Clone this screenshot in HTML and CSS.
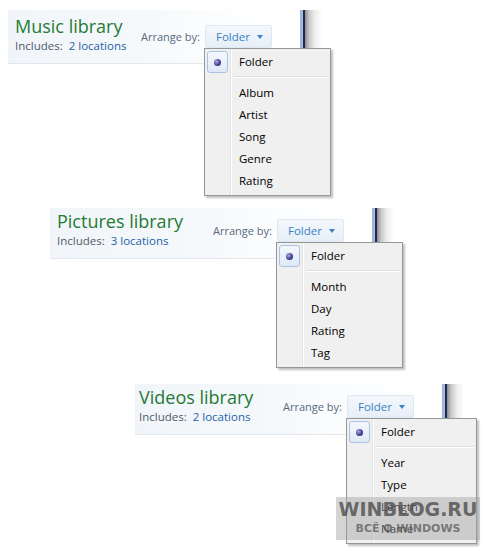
FILE: index.html
```html
<!DOCTYPE html>
<html>
<head>
    <title>Arrange by</title>
    <link rel="stylesheet" href="styles.css">
</head>
<body>
    <div class="panel panel-music">
        <div class="lib-header">
            <div class="lib-title">
                <h1>Music library</h1>
                <p>Includes: &nbsp;<a href="#">2 locations</a></p>
            </div>
            <div class="arrange">
                <span class="arrange-label">Arrange by:</span>
                <div class="dd">
                    <button type="button" class="dd-btn">Folder <span class="caret"></span></button>
                    <div class="menu">
                        <div class="menu-item checked"><span class="check"><span class="dot"></span></span>Folder</div>
                        <div class="menu-sep"></div>
                        <div class="menu-item">Album</div>
                        <div class="menu-item">Artist</div>
                        <div class="menu-item">Song</div>
                        <div class="menu-item">Genre</div>
                        <div class="menu-item">Rating</div>
                    </div>
                </div>
            </div>
            <div class="win-edge"></div>
        </div>
    </div>

    <div class="panel panel-pictures">
        <div class="lib-header">
            <div class="lib-title">
                <h1>Pictures library</h1>
                <p>Includes: &nbsp;<a href="#">3 locations</a></p>
            </div>
            <div class="arrange">
                <span class="arrange-label">Arrange by:</span>
                <div class="dd">
                    <button type="button" class="dd-btn">Folder <span class="caret"></span></button>
                    <div class="menu">
                        <div class="menu-item checked"><span class="check"><span class="dot"></span></span>Folder</div>
                        <div class="menu-sep"></div>
                        <div class="menu-item">Month</div>
                        <div class="menu-item">Day</div>
                        <div class="menu-item">Rating</div>
                        <div class="menu-item">Tag</div>
                    </div>
                </div>
            </div>
            <div class="win-edge"></div>
        </div>
    </div>

    <div class="panel panel-videos">
        <div class="lib-header">
            <div class="lib-title">
                <h1>Videos library</h1>
                <p>Includes: &nbsp;<a href="#">2 locations</a></p>
            </div>
            <div class="arrange">
                <span class="arrange-label">Arrange by:</span>
                <div class="dd">
                    <button type="button" class="dd-btn">Folder <span class="caret"></span></button>
                    <div class="menu menu-wide">
                        <div class="menu-item checked"><span class="check"><span class="dot"></span></span>Folder</div>
                        <div class="menu-sep"></div>
                        <div class="menu-item">Year</div>
                        <div class="menu-item">Type</div>
                        <div class="menu-item">Length</div>
                        <div class="menu-item">Name</div>
                    </div>
                </div>
            </div>
            <div class="win-edge"></div>
        </div>
    </div>

    <div class="watermark">
        <div class="wm-big">WINBLOG.RU</div>
        <div class="wm-small">ВСЁ О WINDOWS</div>
    </div>
</body>
</html>
```

FILE: styles.css
```css
body {
    margin: 0;
    font-family: "Open Sans", "Noto Sans", sans-serif;
    background: #fff;
    position: relative;
    height: 551px;
    overflow: hidden;
}

.panel {
    position: relative;
}
.panel-music {
    margin: 10px 0 0 8px;
    width: 314px;
}
.panel-pictures {
    margin: 144px 0 0 50px;
    width: 344px;
}
.panel-videos {
    margin: 125px 0 0 135px;
    width: 329px;
}

/* header strip of the library pane */
.lib-header {
    display: flex;
    align-items: flex-start;
    height: 50px;
    border-bottom: 1px solid #e3e8ee;
    background: linear-gradient(to right, #f1f5f9 0%, #f6f9fb 45%, #fdfeff 75%, #fff 90%);
    white-space: nowrap;
}
.panel-music .lib-header {
    height: 50px;
    padding-top: 3px;
}

.lib-title {
    flex-shrink: 0;
    padding: 1px 0 0 7px;
}
.panel-videos .lib-title {
    padding-left: 4px;
}
.lib-title h1 {
    margin: 0;
    font-size: 18px;
    line-height: 24px;
    font-weight: normal;
    color: #257a36;
}
.lib-title p {
    margin: 0;
    font-size: 11.5px;
    line-height: 15px;
    color: #4e5b68;
}
.lib-title a {
    color: #1f62a8;
    text-decoration: none;
}

.arrange {
    flex-shrink: 0;
    margin-left: auto;
    margin-right: 28px;
    display: flex;
    align-items: center;
    gap: 5px;
    padding-top: 11px;
}
.panel-music .arrange {
    padding-top: 12px;
}
.arrange-label {
    font-size: 11px;
    color: #596a7d;
}

.dd {
    position: relative;
}
.dd-btn {
    display: block;
    width: 67px;
    height: 23px;
    padding: 0 0 0 10px;
    text-align: left;
    font-family: inherit;
    font-size: 11.5px;
    color: #3b82c4;
    border: 1px solid #dde8f2;
    border-radius: 2px;
    background: linear-gradient(#f4f8fc, #e6eef7);
}
.caret {
    display: inline-block;
    margin-left: 4px;
    vertical-align: 2px;
    border-left: 3.5px solid transparent;
    border-right: 3.5px solid transparent;
    border-top: 4px solid #3b82c4;
}

/* the window frame edge to the right of the header */
.win-edge {
    flex-shrink: 0;
    width: 22px;
    height: 36px;
    background: linear-gradient(to right, #9ab2d8 0, #a8bde0 3px, #1d2a4c 3px, #1d2a4c 5px, #8b8b8b 5px, #c9c9c9 9px, #eeeeee 15px, #fff 22px);
}
.panel-music .win-edge {
    margin-top: -3px;
    height: 39px;
}

/* dropdown menu */
.menu {
    position: absolute;
    left: -1px;
    top: 23px;
    width: 121px;
    padding: 2px 2px 3px;
    border: 1px solid #979797;
    background-color: #f0f0f0;
    background-image: linear-gradient(to right, transparent 25px, #e2e3e3 25px, #e2e3e3 26px, #ffffff 26px, #ffffff 27px, transparent 27px);
    box-shadow: 2px 2px 2px rgba(0, 0, 0, 0.25);
    z-index: 2;
}
.menu-wide {
    width: 125px;
}
.menu-item {
    position: relative;
    height: 22px;
    line-height: 22px;
    padding-left: 32px;
    font-size: 11.5px;
    color: #000;
}
.check {
    position: absolute;
    left: 0;
    top: 0;
    width: 19px;
    height: 20px;
    border: 1px solid #a9c4e2;
    border-radius: 3px;
    background: linear-gradient(#f4f8fd, #dfe9f6);
    display: flex;
    align-items: center;
    justify-content: center;
}
.dot {
    width: 7px;
    height: 7px;
    border-radius: 50%;
    background: radial-gradient(circle at 35% 35%, #a9a9e0, #3b3b8e 60%, #25255e);
}
.menu-sep {
    height: 1px;
    margin: 3px 0 4px 27px;
    background: #e0e0e0;
    border-bottom: 1px solid #fff;
}

/* site watermark over the bottom right */
.watermark {
    position: absolute;
    left: 336px;
    top: 497px;
    width: 144px;
    height: 43px;
    background: rgba(160, 160, 160, 0.45);
    text-align: center;
    font-family: "DejaVu Sans", sans-serif;
    font-weight: bold;
    color: rgba(75, 75, 75, 0.8);
    z-index: 3;
    overflow: hidden;
}
.wm-big {
    font-size: 19px;
    line-height: 25px;
}
.wm-small {
    font-size: 11px;
    line-height: 14px;
    color: rgba(90, 90, 90, 0.75);
}
```
